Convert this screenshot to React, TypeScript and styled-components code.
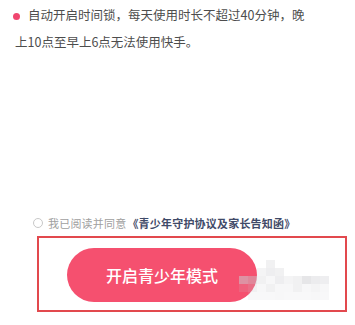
import React from "react";
import styled, { createGlobalStyle } from "styled-components";

const Global = createGlobalStyle`
  html, body { margin: 0; padding: 0; background: #ffffff; }
  body { font-family: "Noto Sans CJK SC", "Noto Sans", sans-serif; }
`;

const Page = styled.div`
  width: 355px;
  height: 325px;
  display: flex;
  flex-direction: column;
  box-sizing: border-box;
  overflow: hidden;
`;

const Notice = styled.p`
  margin: 0;
  padding: 1px 50px 0 15px;
  font-size: 12.5px;
  line-height: 27px;
  color: #4d4d4d;
`;

const Dot = styled.span`
  display: inline-block;
  width: 7px;
  height: 7px;
  border-radius: 50%;
  background: #f0466f;
  margin: 0 8px 1px -2px;
  vertical-align: middle;
`;

const Bottom = styled.div`
  margin-top: auto;
  padding: 0 0 13px 33px;
  display: flex;
  flex-direction: column;
`;

const AgreeRow = styled.label`
  display: flex;
  align-items: center;
  gap: 5px;
  height: 16px;
  font-size: 11px;
  letter-spacing: 0.2px;
  color: #a0a0a0;
  white-space: nowrap;
`;

const Radio = styled.span`
  width: 8px;
  height: 8px;
  border-radius: 50%;
  border: 1px solid #c8c8c8;
  flex: none;
`;

const Link = styled.span`
  color: #3f4a68;
  font-weight: 700;
  margin-left: -4px;
`;

const Frame = styled.div`
  position: relative;
  margin: 5px 0 0 4px;
  width: 310px;
  height: 76px;
  box-sizing: border-box;
  border: 2px solid #e2494e;
  padding: 10px 0 0 28px;
`;

const StartButton = styled.button`
  width: 190px;
  height: 54px;
  border: none;
  border-radius: 27px;
  background: #f5506f;
  color: #ffffff;
  font-family: "Noto Sans CJK SC", sans-serif;
  font-size: 16px;
  font-weight: 500;
  padding: 0;
`;

const Mosaic = styled.div`
  position: absolute;
  left: 200px;
  top: 22px;
  display: grid;
  grid-template-columns: repeat(11, 9px);
  grid-auto-rows: 8px;
`;

const Cell = styled.span<{ $a: number }>`
  background: rgba(200, 200, 205, ${(p) => p.$a});
`;

const cells = [
  0, 0, 0, 0.25, 0, 0, 0, 0, 0, 0, 0,
  0, 0, 0.2, 0.3, 0.25, 0, 0, 0, 0, 0, 0,
  0.55, 0.45, 0.25, 0.15, 0.3, 0.2, 0.25, 0.45, 0.35, 0.3, 0,
  0.15, 0.25, 0.15, 0.25, 0.15, 0.15, 0.25, 0.15, 0.2, 0.15, 0,
  0, 0.12, 0.12, 0.12, 0.15, 0.12, 0.12, 0.12, 0.15, 0.12, 0,
];

export default function App() {
  return (
    <>
      <Global />
      <Page>
        <Notice>
          <Dot />
          自动开启时间锁，每天使用时长不超过40分钟，晚上10点至早上6点无法使用快手。
        </Notice>
        <Bottom>
          <AgreeRow>
            <Radio />
            我已阅读并同意
            <Link>《青少年守护协议及家长告知函》</Link>
          </AgreeRow>
          <Frame>
            <StartButton>开启青少年模式</StartButton>
            <Mosaic>
              {cells.map((a, i) => (
                <Cell key={i} $a={a} />
              ))}
            </Mosaic>
          </Frame>
        </Bottom>
      </Page>
    </>
  );
}
